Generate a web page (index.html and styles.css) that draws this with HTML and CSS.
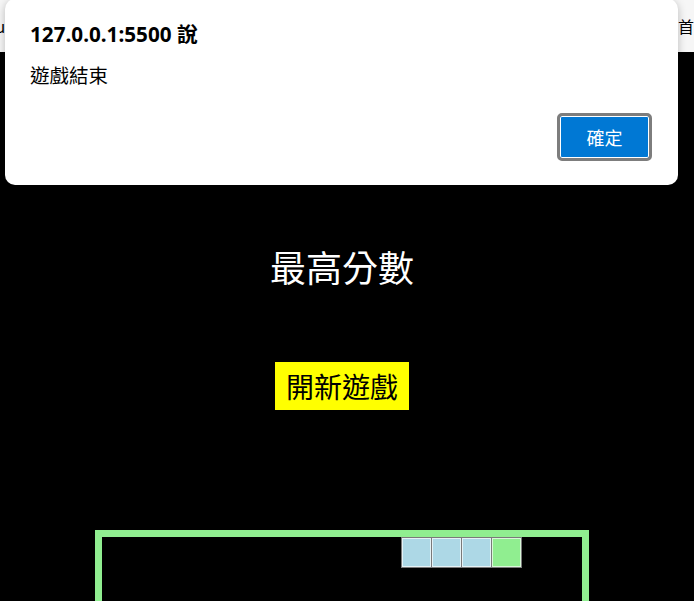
FILE: index.html
```html
<!DOCTYPE html>
<html lang="zh-Hant">
<head>
<meta charset="utf-8">
<title>貪食蛇</title>
<link rel="stylesheet" href="styles.css">
</head>
<body>
<header class="topbar">
  <span class="nav-left">Menu</span>
  <span class="nav-right">首頁</span>
</header>
<main class="game">
  <h1 class="score-title">最高分數</h1>
  <button class="new-game">開新遊戲</button>
  <div class="board">
    <div class="cell body" style="grid-column: 11; grid-row: 1;"></div>
    <div class="cell body" style="grid-column: 12; grid-row: 1;"></div>
    <div class="cell body" style="grid-column: 13; grid-row: 1;"></div>
    <div class="cell head" style="grid-column: 14; grid-row: 1;"></div>
  </div>
</main>
<div class="dialog" role="alertdialog">
  <div class="dialog-title">127.0.0.1:5500 說</div>
  <div class="dialog-msg">遊戲結束</div>
  <div class="dialog-actions">
    <button class="dialog-ok">確定</button>
  </div>
</div>
</body>
</html>
```
FILE: styles.css
```css
html, body {
  margin: 0;
  padding: 0;
  background: #000;
  height: 100%;
  overflow: hidden;
}
body {
  font-family: "Noto Sans", "Noto Sans CJK TC", sans-serif;
  position: relative;
}
.topbar {
  height: 52px;
  background: #f6f6f6;
  display: flex;
  justify-content: space-between;
  align-items: center;
  overflow: hidden;
  font-family: "Noto Sans CJK TC", sans-serif;
  font-size: 16px;
  color: #000;
}
.nav-left {
  margin-left: -36px;
}
.nav-right {
  margin-right: -16px;
}
.game {
  width: 684px;
  display: flex;
  flex-direction: column;
  align-items: center;
}
.score-title {
  margin: 193px 0 0;
  font-family: "Noto Sans CJK TC", sans-serif;
  font-weight: 400;
  font-size: 36px;
  line-height: 43px;
  color: #fff;
}
.new-game {
  margin-top: 74px;
  background: #ffff00;
  border: none;
  padding: 6px 11px;
  font-family: "Noto Sans CJK TC", sans-serif;
  font-size: 28px;
  line-height: 36px;
  color: #000;
}
.board {
  margin-top: 120px;
  border: 7px solid #90ee90;
  width: 480px;
  height: 480px;
  display: grid;
  grid-template-columns: repeat(16, 30px);
  grid-template-rows: repeat(16, 30px);
}
.cell {
  box-sizing: border-box;
  border: 1px solid #7a7a7a;
  box-shadow: inset 0 0 0 1px #e4f2f6;
  margin-left: -1px;
  width: 31px;
  height: 31px;
}
.cell.body {
  background: #add8e6;
}
.cell.head {
  background: #90ee90;
  box-shadow: inset 0 0 0 1px #d8f8d8;
}
.dialog {
  position: absolute;
  left: 5px;
  top: -1px;
  width: 673px;
  height: 186px;
  box-sizing: border-box;
  background: #fff;
  border-radius: 10px;
  box-shadow: 0 2px 8px rgba(0, 0, 0, 0.25);
  padding: 21px 26px 24px 25px;
  display: flex;
  flex-direction: column;
}
.dialog-title {
  font-family: "Noto Sans", "Noto Sans CJK TC", sans-serif;
  font-weight: 700;
  font-size: 20.7px;
  line-height: 28px;
  color: #000;
}
.dialog-msg {
  margin-top: 15px;
  font-family: "Noto Sans CJK TC", sans-serif;
  font-size: 19.5px;
  line-height: 24px;
  color: #000;
}
.dialog-actions {
  margin-top: auto;
  display: flex;
  justify-content: flex-end;
}
.dialog-ok {
  width: 95px;
  height: 48px;
  box-sizing: border-box;
  background: #0078d4;
  border: 3px solid #7d7d7d;
  border-radius: 5px;
  box-shadow: inset 0 0 0 1px #fff;
  color: #fff;
  font-family: "Noto Sans CJK TC", sans-serif;
  font-size: 18px;
  padding: 0;
}
```
